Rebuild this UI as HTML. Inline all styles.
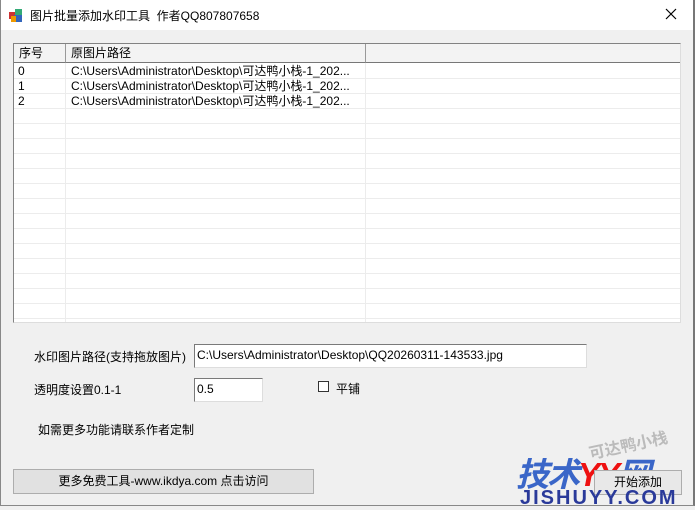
<!DOCTYPE html>
<html><head><style>
*{margin:0;padding:0;box-sizing:border-box}
body{width:695px;height:506px;background:#f0f0f0;font-family:"Liberation Sans","Noto Sans CJK SC",sans-serif;font-size:12px;color:#000;position:relative;overflow:hidden}
.a{position:absolute;white-space:nowrap}
#title{left:0;top:0;width:695px;height:30px;background:#fff}
#frame{left:0;top:0;width:695px;height:506px;border-left:1px solid #888;border-right:2px solid #777;border-bottom:1px solid #888}
#lv{left:13px;top:43px;width:668px;height:280px;background:#fff;border:1px solid #828282;border-right-color:#ddd;border-bottom-color:#ddd;overflow:hidden}
.hd{position:absolute;top:0;height:19px;background:#f3f3f3;border-bottom:1px solid #777;border-right:1px solid #999;padding-left:5px;line-height:19px}
.row{position:absolute;left:0;width:668px;height:15px;border-bottom:1px solid #ececec;line-height:15px}
.vl{position:absolute;top:19px;bottom:0;width:1px;background:#ececec}
.box{background:#fff;border:1px solid #7a7a7a;border-right-color:#ddd;border-bottom-color:#ddd;line-height:20px;padding-left:2px;overflow:hidden}
.btn{background:#e1e1e1;border:1px solid #adadad;text-align:center;line-height:22px}
</style></head><body>
<div class="a" id="title"></div>
<svg class="a" style="left:8px;top:7px" width="16" height="16"><rect x="1" y="5" width="7" height="7" fill="#c33"/><rect x="7" y="2" width="7" height="7" fill="#3a7"/><rect x="6" y="8" width="8" height="7" fill="#36b"/><rect x="3" y="9" width="5" height="6" fill="#e90"/></svg>
<div class="a" style="left:30px;top:7px">图片批量添加水印工具&nbsp; 作者QQ807807658</div>
<svg class="a" style="left:665px;top:8px" width="12" height="12"><path d="M1 1L11 11M11 1L1 11" stroke="#000" stroke-width="1.2"/></svg>
<div class="a" id="lv">
 <div class="hd" style="left:0;width:52px">序号</div>
 <div class="hd" style="left:52px;width:300px">原图片路径</div>
 <div class="hd" style="left:352px;width:316px;border-right:none"></div>
 <div class="row" style="top:20px;padding-left:4px">0<span class="a" style="left:57px">C:\Users\Administrator\Desktop\可达鸭小栈-1_202...</span></div>
 <div class="row" style="top:35px;padding-left:4px">1<span class="a" style="left:57px">C:\Users\Administrator\Desktop\可达鸭小栈-1_202...</span></div>
 <div class="row" style="top:50px;padding-left:4px">2<span class="a" style="left:57px">C:\Users\Administrator\Desktop\可达鸭小栈-1_202...</span></div>
 <div class="row" style="top:65px"></div><div class="row" style="top:80px"></div><div class="row" style="top:95px"></div><div class="row" style="top:110px"></div><div class="row" style="top:125px"></div><div class="row" style="top:140px"></div><div class="row" style="top:155px"></div><div class="row" style="top:170px"></div><div class="row" style="top:185px"></div><div class="row" style="top:200px"></div><div class="row" style="top:215px"></div><div class="row" style="top:230px"></div><div class="row" style="top:245px"></div><div class="row" style="top:260px"></div>
 <div class="vl" style="left:51px"></div><div class="vl" style="left:351px"></div>
</div>
<div class="a" style="left:34px;top:348px">水印图片路径(支持拖放图片)</div>
<div class="a box" style="left:194px;top:344px;width:393px;height:24px">C:\Users\Administrator\Desktop\QQ20260311-143533.jpg</div>
<div class="a" style="left:34px;top:381px">透明度设置0.1-1</div>
<div class="a box" style="left:194px;top:378px;width:69px;height:24px">0.5</div>
<div class="a" style="left:318px;top:381px;width:11px;height:11px;border:1px solid #333;background:#fff"></div>
<div class="a" style="left:336px;top:380px">平铺</div>
<div class="a" style="left:38px;top:421px">如需更多功能请联系作者定制</div>
<div class="a btn" style="left:13px;top:469px;width:301px;height:25px">更多免费工具-www.ikdya.com 点击访问</div>
<div class="a" style="left:588px;top:432px;color:#bbb;font-size:16px;font-weight:bold;transform:rotate(-12deg)">可达鸭小栈</div>
<div class="a" style="left:516px;top:448px;font-size:33px;font-style:italic;font-weight:bold;color:#3a66c8;letter-spacing:-2px">技术<span style="color:#e11">YY</span><span style="color:#3a66c8">网</span></div>
<div class="a btn" style="left:594px;top:470px;width:88px;height:25px;background:#e8e8e8">开始添加</div>
<div class="a" style="left:520px;top:487px;font-size:20px;font-weight:bold;color:#2a3a9a;letter-spacing:2px">JISHUYY.COM</div>
<div class="a" id="frame"></div>
</body></html>
